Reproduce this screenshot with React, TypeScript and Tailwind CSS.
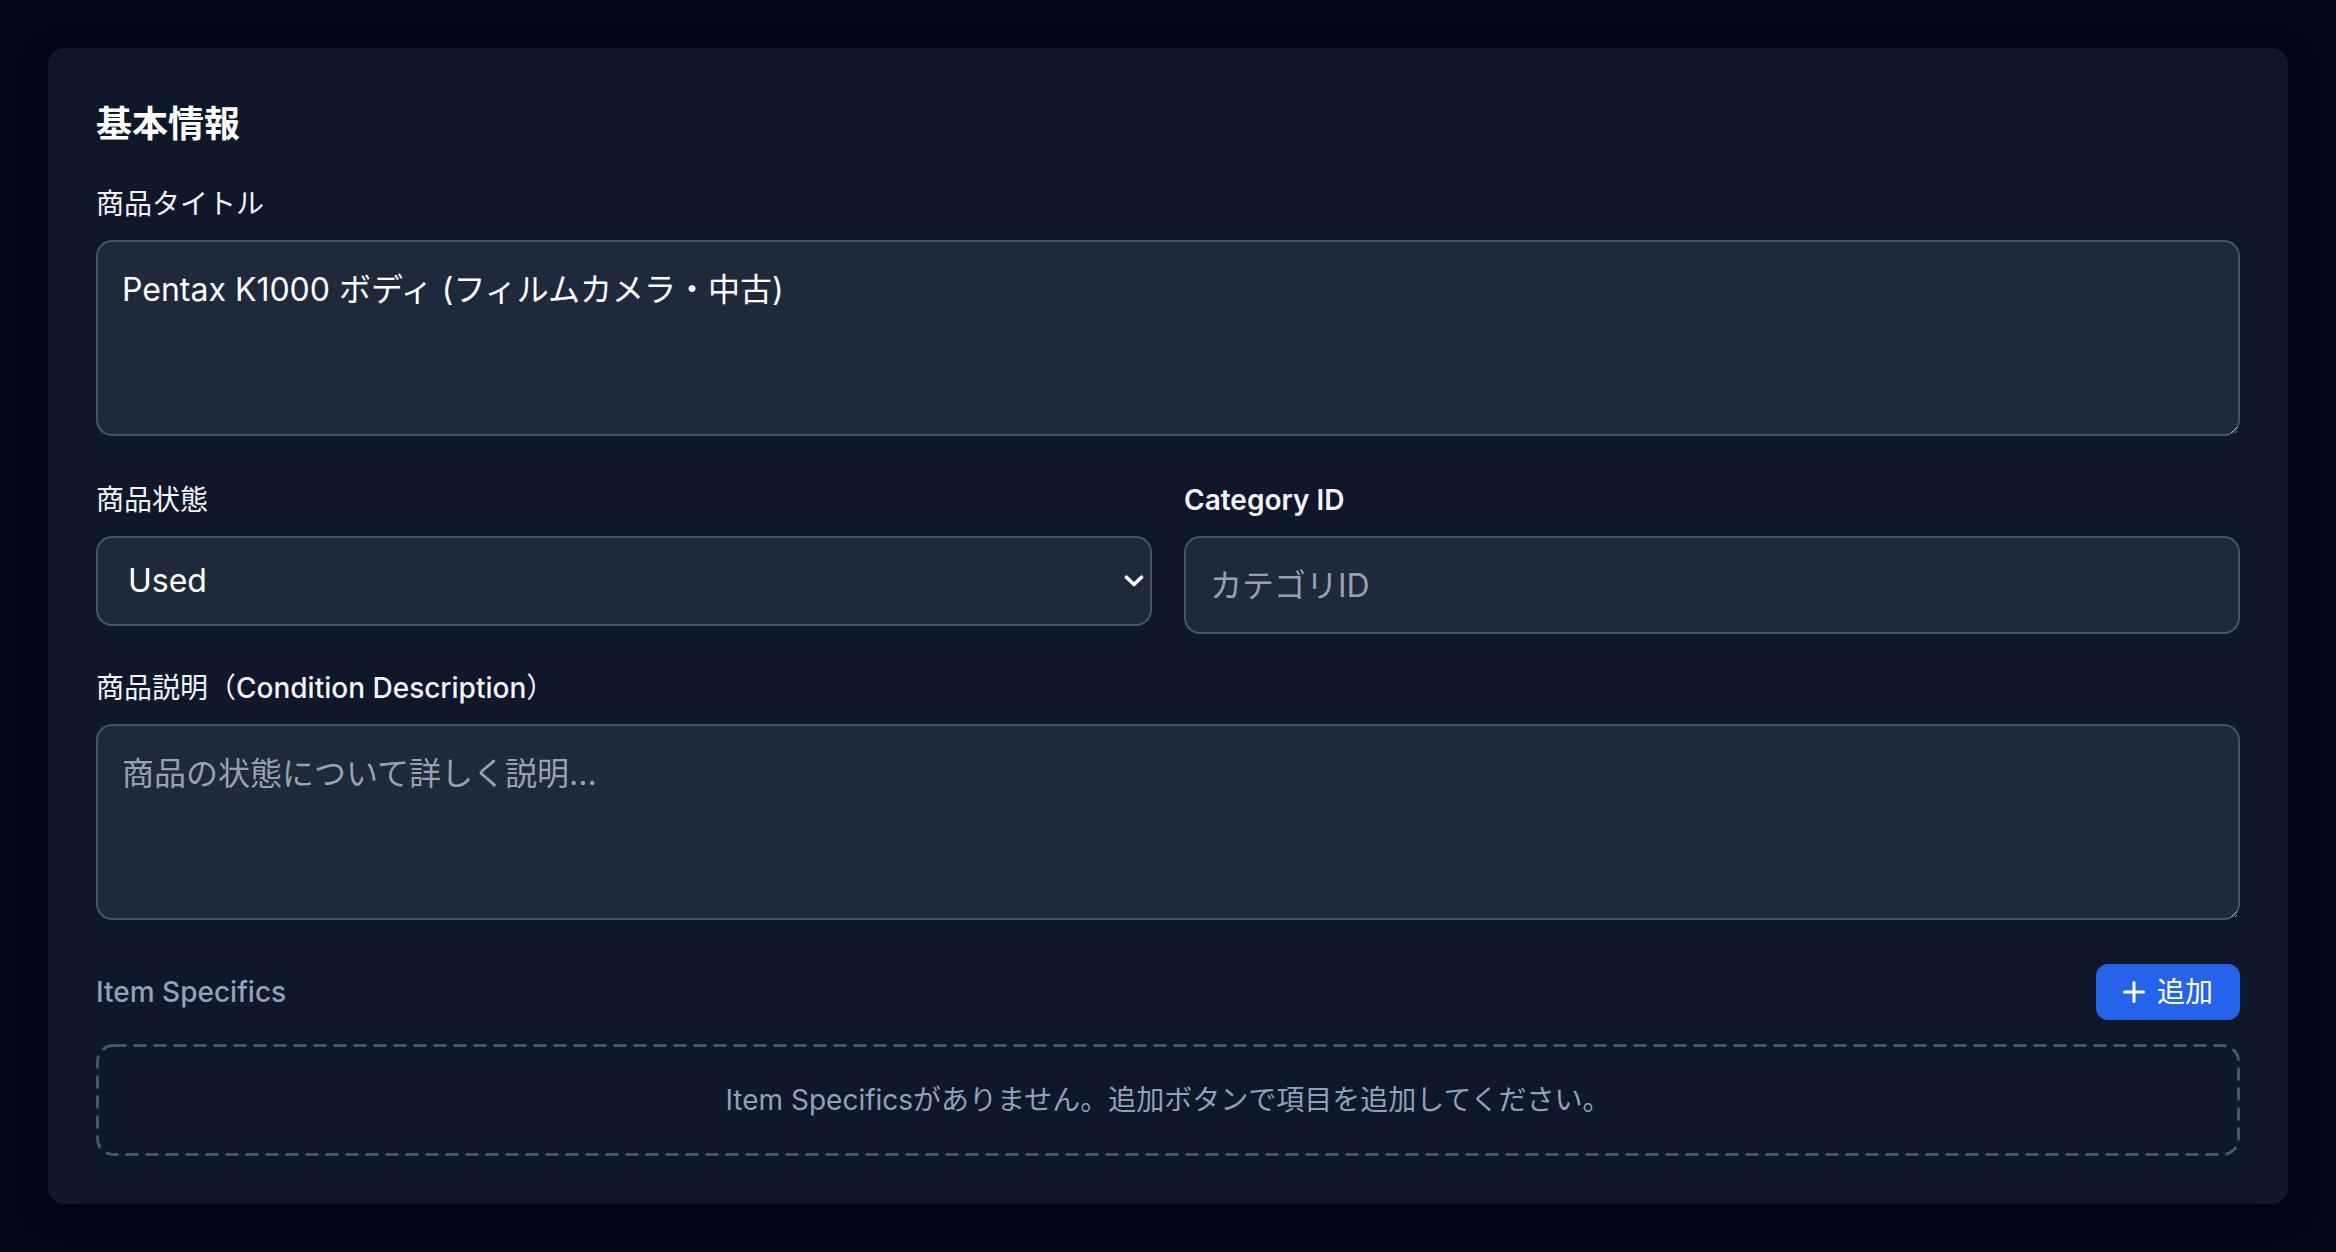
import React from "react";

function Chevron() {
  return (
    <svg width="20" height="12" viewBox="0 0 20 12" fill="none" className="block">
      <polyline points="2.5,2.2 10,9.5 17.5,2.2" stroke="#ffffff" strokeWidth="3.6" strokeLinecap="round" strokeLinejoin="round" />
    </svg>
  );
}

function PlusIcon() {
  return (
    <svg width="22" height="22" viewBox="0 0 22 22" fill="none" className="block">
      <line x1="11" y1="1.5" x2="11" y2="20.5" stroke="#ffffff" strokeWidth="3" strokeLinecap="round" />
      <line x1="1.5" y1="11" x2="20.5" y2="11" stroke="#ffffff" strokeWidth="3" strokeLinecap="round" />
    </svg>
  );
}

export default function App() {
  return (
    <div className="min-h-screen bg-[#020617] p-12 font-[family-name:Inter,'Noto_Sans_CJK_JP',sans-serif] text-white">
      <div className="rounded-2xl bg-[#0f172a] p-12 shadow-[0_8px_30px_rgba(0,0,0,0.45)]">
        <h2 className="mb-8 text-[36px] font-bold leading-[56px] text-white">基本情報</h2>

        <div className="flex flex-col">
          {/* Title */}
          <label className="mb-4 block text-[28px] leading-[40px] text-gray-100">商品タイトル</label>
          <textarea
            className="block h-[196px] w-full resize-y rounded-[16px] border-2 border-[#475569] bg-[#1e293b] px-6 py-6 text-[32px] leading-[48px] text-white outline-none [color-scheme:dark]"
            defaultValue="Pentax K1000 ボディ (フィルムカメラ・中古)"
          />

          {/* Condition + Category */}
          <div className="mt-[44px] grid grid-cols-2 gap-8">
            <div className="flex flex-col">
              <label className="mb-4 block text-[28px] leading-[40px] text-gray-100">商品状態</label>
              <div className="relative">
                <select
                  className="block h-[90px] w-full appearance-none rounded-[16px] border-2 border-[#475569] bg-[#1e293b] pl-[30px] pr-12 text-[32px] text-white outline-none"
                  defaultValue="Used"
                >
                  <option value="New">New</option>
                  <option value="Used">Used</option>
                  <option value="For parts">For parts</option>
                </select>
                <div className="pointer-events-none absolute right-[8px] top-[39px]">
                  <Chevron />
                </div>
              </div>
            </div>
            <div className="flex flex-col">
              <label className="mb-4 block text-[28px] font-semibold leading-[40px] text-gray-100">Category ID</label>
              <input
                type="text"
                placeholder="カテゴリID"
                className="block h-[98px] w-full rounded-[16px] border-2 border-[#475569] bg-[#1e293b] px-6 text-[32px] text-white outline-none placeholder:text-gray-400"
              />
            </div>
          </div>

          {/* Description */}
          <label className="mb-4 mt-[34px] block text-[28px] leading-[40px] text-gray-100">
            <span className="font-normal">商品説明（</span>
            <span className="font-medium">Condition Description</span>
            <span className="font-normal">）</span>
          </label>
          <textarea
            className="block h-[196px] w-full resize-y rounded-[16px] border-2 border-[#475569] bg-[#1e293b] px-6 py-6 text-[32px] leading-[48px] text-white outline-none placeholder:text-gray-400 [color-scheme:dark]"
            placeholder="商品の状態について詳しく説明..."
          />

          {/* Item Specifics */}
          <div className="mb-6 mt-[44px] flex h-[56px] items-center justify-between">
            <span className="text-[28px] font-medium leading-[40px] text-slate-400">Item Specifics</span>
            <button
              type="button"
              className="flex h-[56px] w-[144px] items-center justify-center gap-3 rounded-[12px] bg-[#2563eb] text-[28px] leading-[40px] text-white"
            >
              <PlusIcon />
              <span>追加</span>
            </button>
          </div>
          <div className="relative flex h-[112px] items-center justify-center text-[28px] leading-[40px] text-slate-400">
            <svg className="pointer-events-none absolute inset-0 h-full w-full" fill="none">
              <rect
                x="1.5"
                y="1.5"
                width="2141"
                height="109"
                rx="16"
                ry="16"
                stroke="#475569"
                strokeWidth="3"
                strokeDasharray="13 7"
              />
            </svg>
            <span className="relative">Item Specificsがありません。追加ボタンで項目を追加してください。</span>
          </div>
        </div>
      </div>
    </div>
  );
}
